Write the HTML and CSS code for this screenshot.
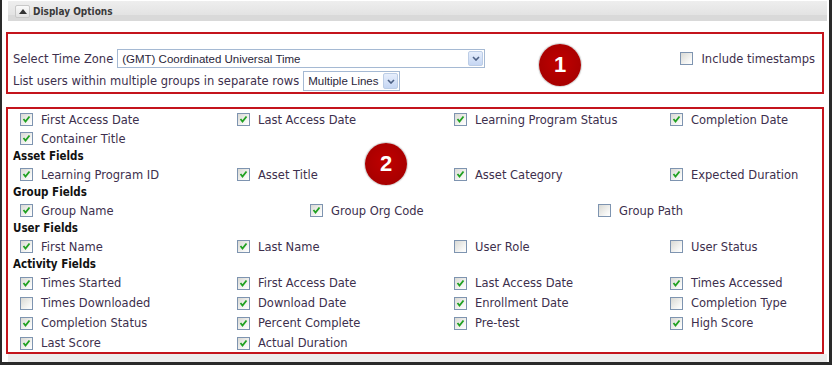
FILE: index.html
```html
<!DOCTYPE html>
<html lang="en">

<head>
    <meta charset="UTF-8">
    <title>Display Options</title>
    <link rel="stylesheet" href="styles.css">
</head>

<body>
    <div class="panel">
        <!-- Panel header -->
        <div class="panel-head">
            <span class="collapse-btn">
                <svg width="8" height="5" viewBox="0 0 8 5"><polygon points="0,5 4,0 8,5" fill="#333"/></svg>
            </span>
            <span class="panel-title">Display Options</span>
        </div>

        <!-- Box 1: time zone -->
        <div class="callout-box box-one">
            <div class="tz-col">
                <div class="tz-row">
                    <span class="lbl">Select Time Zone</span>
                    <div class="fake-select tz-select">
                        <span class="fake-select-text">(GMT) Coordinated Universal Time</span>
                        <span class="fake-select-arrow"><svg width="8" height="5" viewBox="0 0 8 5"><polyline points="1,1 4,4 7,1" fill="none" stroke="#4d6185" stroke-width="1.6"/></svg></span>
                    </div>
                </div>
                <div class="tz-row">
                    <span class="lbl">List users within multiple groups in separate rows</span>
                    <div class="fake-select lines-select">
                        <span class="fake-select-text">Multiple Lines</span>
                        <span class="fake-select-arrow"><svg width="8" height="5" viewBox="0 0 8 5"><polyline points="1,1 4,4 7,1" fill="none" stroke="#4d6185" stroke-width="1.6"/></svg></span>
                    </div>
                </div>
            </div>
            <label class="chk-item ts-item"><span class="chk"></span>Include timestamps</label>
            <div class="badge badge-one">1</div>
        </div>

        <!-- Box 2: fields -->
        <div class="callout-box box-two">
            <div class="field-grid cols-4">
                <label class="chk-item"><span class="chk on"></span>First Access Date</label>
                <label class="chk-item"><span class="chk on"></span>Last Access Date</label>
                <label class="chk-item"><span class="chk on"></span>Learning Program Status</label>
                <label class="chk-item"><span class="chk on"></span>Completion Date</label>
                <label class="chk-item"><span class="chk on"></span>Container Title</label>
            </div>

            <div class="group-title">Asset Fields</div>
            <div class="field-grid cols-4">
                <label class="chk-item"><span class="chk on"></span>Learning Program ID</label>
                <label class="chk-item"><span class="chk on"></span>Asset Title</label>
                <label class="chk-item"><span class="chk on"></span>Asset Category</label>
                <label class="chk-item"><span class="chk on"></span>Expected Duration</label>
            </div>

            <div class="group-title">Group Fields</div>
            <div class="field-grid cols-3">
                <label class="chk-item"><span class="chk on"></span>Group Name</label>
                <label class="chk-item"><span class="chk on"></span>Group Org Code</label>
                <label class="chk-item"><span class="chk"></span>Group Path</label>
            </div>

            <div class="group-title">User Fields</div>
            <div class="field-grid cols-4">
                <label class="chk-item"><span class="chk on"></span>First Name</label>
                <label class="chk-item"><span class="chk on"></span>Last Name</label>
                <label class="chk-item"><span class="chk"></span>User Role</label>
                <label class="chk-item"><span class="chk"></span>User Status</label>
            </div>

            <div class="group-title">Activity Fields</div>
            <div class="field-grid cols-4 tall">
                <label class="chk-item"><span class="chk on"></span>Times Started</label>
                <label class="chk-item"><span class="chk on"></span>First Access Date</label>
                <label class="chk-item"><span class="chk on"></span>Last Access Date</label>
                <label class="chk-item"><span class="chk on"></span>Times Accessed</label>
                <label class="chk-item"><span class="chk"></span>Times Downloaded</label>
                <label class="chk-item"><span class="chk on"></span>Download Date</label>
                <label class="chk-item"><span class="chk on"></span>Enrollment Date</label>
                <label class="chk-item"><span class="chk"></span>Completion Type</label>
                <label class="chk-item"><span class="chk on"></span>Completion Status</label>
                <label class="chk-item"><span class="chk on"></span>Percent Complete</label>
                <label class="chk-item"><span class="chk on"></span>Pre-test</label>
                <label class="chk-item"><span class="chk on"></span>High Score</label>
                <label class="chk-item"><span class="chk on"></span>Last Score</label>
                <label class="chk-item"><span class="chk on"></span>Actual Duration</label>
            </div>

            <div class="badge badge-two">2</div>
        </div>

        <div class="panel-foot"></div>
    </div>
</body>

</html>
```

FILE: styles.css
```css
body {
    margin: 0;
    background-color: #fff;
    font-family: 'DejaVu Sans', sans-serif;
    font-size: 11.5px;
    color: #3d2f4d;
}

.panel {
    width: 832px;
    height: 365px;
    box-sizing: border-box;
    border-left: 2px solid #2a2a2a;
    border-right: 3px solid #2a2a2a;
    border-bottom: 3px solid #2a2a2a;
    padding-top: 1px;
    display: flex;
    flex-direction: column;
}

/* Header bar */
.panel-head {
    height: 20px;
    margin: 0 0 0 6px;
    width: 819px;
    background: linear-gradient(#eeeeee, #e3e3e3 70%, #d9d9d9 72%, #d9d9d9);
    display: flex;
    align-items: center;
}

.collapse-btn {
    width: 13px;
    height: 11px;
    margin-left: 7px;
    border: 1px solid #c8c8c8;
    border-radius: 2px;
    background: linear-gradient(#fafafa, #e2e2e2);
    display: flex;
    align-items: center;
    justify-content: center;
}

.panel-title {
    margin-left: 3px;
    font-family: 'DejaVu Sans Condensed', 'DejaVu Sans', sans-serif;
    font-size: 10px;
    font-weight: bold;
    color: #3a3a3a;
}

/* Red callout boxes */
.callout-box {
    position: relative;
    margin-left: 4px;
    width: 818px;
    box-sizing: border-box;
    border: 2px solid #c4141c;
}

.box-one {
    margin-top: 11px;
    height: 62px;
    padding: 15px 7px 0 5px;
    display: flex;
    align-items: flex-start;
}

.tz-col {
    flex: 1;
    display: flex;
    flex-direction: column;
    gap: 3px;
}

.tz-row {
    display: flex;
    align-items: center;
}

.tz-row .lbl {
    margin-right: 4px;
}

.fake-select {
    display: flex;
    align-items: center;
    box-sizing: border-box;
    border: 1px solid #a5b9d3;
    background: #fff;
    padding: 1px;
    font-family: 'Liberation Sans', Arial, sans-serif;
    font-size: 11.5px;
    color: #2a1f3a;
}

.tz-select {
    width: 368px;
    height: 19px;
}

.lines-select {
    width: 97px;
    height: 20px;
}

.fake-select-text {
    flex: 1;
    padding-left: 3px;
    white-space: nowrap;
}

.fake-select-arrow {
    width: 15px;
    height: 100%;
    box-sizing: border-box;
    border: 1px solid #bccde6;
    border-radius: 2px;
    background: linear-gradient(#e6eefc, #c5d6f3);
    display: flex;
    align-items: center;
    justify-content: center;
}

.ts-item {
    height: 19px;
}

/* Checkbox items */
.chk-item {
    display: flex;
    align-items: center;
    gap: 8px;
    white-space: nowrap;
}

.chk {
    width: 13px;
    height: 13px;
    box-sizing: border-box;
    border: 1px solid #7e94b0;
    background: linear-gradient(135deg, #d9d9d4, #f6f6f4 70%, #fff);
    flex-shrink: 0;
}

.chk.on {
    background:
        url("data:image/svg+xml,%3Csvg xmlns='http://www.w3.org/2000/svg' width='11' height='11'%3E%3Cpolyline points='2.5,5 4.5,7.5 8.5,2.5' fill='none' stroke='%2321a121' stroke-width='1.8'/%3E%3C/svg%3E") center no-repeat,
        linear-gradient(135deg, #d9d9d4, #f6f6f4 70%, #fff);
}

.box-two {
    margin-top: 13px;
    height: 247px;
    padding: 1px 0 0 5px;
}

.group-title {
    height: 17px;
    line-height: 17px;
    font-family: 'DejaVu Sans Condensed', 'DejaVu Sans', sans-serif;
    font-size: 11.5px;
    font-weight: bold;
    color: #111;
}

.field-grid {
    display: grid;
    padding-left: 7px;
    grid-auto-rows: 19px;
}

.field-grid.tall {
    grid-auto-rows: 20px;
}

.cols-4 {
    grid-template-columns: 217px 217px 216px 1fr;
}

.cols-3 {
    grid-template-columns: 290px 288px 1fr;
}

/* Numbered badges over the boxes */
.badge {
    position: absolute;
    width: 42px;
    height: 42px;
    border-radius: 50%;
    background: radial-gradient(circle at 50% 45%, #c00000, #a80000 70%, #9a0000);
    box-shadow: 0 0 1px 1px rgba(120, 120, 120, 0.35);
    color: #fff;
    font-family: 'Liberation Sans', Arial, sans-serif;
    font-weight: bold;
    font-size: 22px;
    display: flex;
    align-items: center;
    justify-content: center;
}

.badge-one {
    left: 531px;
    top: 10px;
}

.badge-two {
    left: 357px;
    top: 34px;
}

.panel-foot {
    flex: 1;
    margin-left: 6px;
    width: 819px;
    background-color: #ececec;
}
```
